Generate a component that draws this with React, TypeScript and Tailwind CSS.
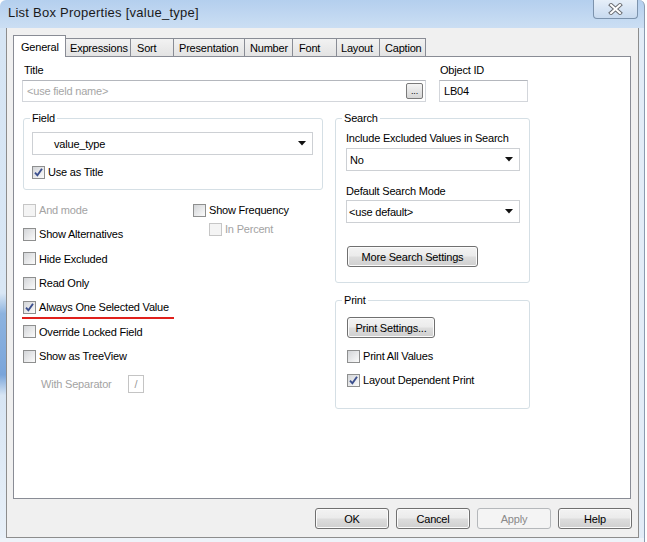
import React from "react";

type CheckProps = {
  label: string;
  checked?: boolean;
  disabled?: boolean;
  className?: string;
};

// checkbox in the Windows 7 style
function Check({ label, checked, disabled, className = "" }: CheckProps) {
  return (
    <div className={`flex items-center ${className}`}>
      <div
        className={`w-[13px] h-[13px] border flex items-center justify-center shrink-0 ${
          disabled
            ? "border-[#c6c6c6] bg-[#f4f4f4]"
            : "border-[#8e8f8f] bg-gradient-to-br from-[#d3d5d8] to-[#fbfbfb]"
        }`}
      >
        {checked && (
          <svg width="11" height="11" viewBox="0 0 11 11">
            <path d="M2 5.6 L4.4 8.3 L9 1.8" fill="none" stroke="#3b4f8e" strokeWidth="1.9" />
          </svg>
        )}
      </div>
      <span className={`ml-[3px] leading-[14px] whitespace-nowrap ${disabled ? "text-[#a3a3a3]" : ""}`}>
        {label}
      </span>
    </div>
  );
}

function Btn({
  children,
  className = "",
  disabled,
}: {
  children: React.ReactNode;
  className?: string;
  disabled?: boolean;
}) {
  return (
    <div
      className={`h-[21px] rounded-[3px] border flex items-center justify-center leading-[14px] ${
        disabled
          ? "border-[#b5b8bb] bg-[#f4f4f4] text-[#8a8a8a]"
          : "border-[#707070] bg-[linear-gradient(to_bottom,#f3f3f3_0%,#ebebeb_48%,#dddddd_52%,#cfcfcf_100%)] shadow-[inset_0_0_0_1px_#fbfbfb]"
      } ${className}`}
    >
      {children}
    </div>
  );
}

function Dropdown({ value, className = "", textClass = "pl-[3px]" }: { value: string; className?: string; textClass?: string }) {
  return (
    <div className={`h-[23px] border border-[#cdd0d4] bg-white flex items-center justify-between ${className}`}>
      <span className={`leading-[14px] ${textClass}`}>{value}</span>
      <svg width="8" height="5" viewBox="0 0 8 5" className="mr-[6px]">
        <path d="M0 0 H8 L4 4.5 Z" fill="#111" />
      </svg>
    </div>
  );
}

const tabs = [
  { name: "Expressions", w: "w-[66px]", pl: "pl-[4px]" },
  { name: "Sort", w: "w-[44px]", pl: "pl-[6px]" },
  { name: "Presentation", w: "w-[72px]", pl: "pl-[5px]" },
  { name: "Number", w: "w-[49px]", pl: "pl-[5px]" },
  { name: "Font", w: "w-[45px]", pl: "pl-[6px]" },
  { name: "Layout", w: "w-[44px]", pl: "pl-[4px]" },
  { name: "Caption", w: "w-[47px]", pl: "pl-[5px]" },
];

export default function App() {
  return (
    <div className="w-[647px] h-[542px] bg-white font-['Liberation_Sans',Arial,sans-serif] text-[11px] tracking-[-0.2px] text-black overflow-hidden">
      <div className="w-[645px] h-[542px] flex flex-col rounded-t-[6px] bg-[linear-gradient(to_bottom,#b4cfee_0%,#cfe1f4_6%,#d8e6f5_40%,#e4eef8_100%)] border-r border-[#8a9bb0]">
        {/* title bar */}
        <div className="h-[28px] flex items-start shrink-0">
          <div className="pl-[8px] pt-[5px] text-[13px] leading-[16px] tracking-[0.25px] text-[#1a1a1a]">
            List Box Properties [value_type]
          </div>
          <div className="ml-auto mr-[6px] w-[45px] h-[19px] rounded-b-[4px] border border-t-0 border-[#7c93ad] bg-gradient-to-b from-[#e6eff9] to-[#c8daef] flex items-center justify-center">
            <svg width="15" height="12" viewBox="0 0 15 12">
              <path d="M3 2 L12 10 M12 2 L3 10" stroke="#6b6f75" strokeWidth="4" strokeLinecap="square" />
              <path d="M3 2 L12 10 M12 2 L3 10" stroke="#ffffff" strokeWidth="2" strokeLinecap="square" />
            </svg>
          </div>
        </div>

        <div className="flex flex-1">
          {/* left frame */}
          <div className="w-[6px] bg-[linear-gradient(to_bottom,#d6e5f4_0%,#d9e7f5_52%,#8db3df_56%,#7aa5da_68%,#d7e5f4_72%,#e8f0f8_100%)]" />

          {/* client area */}
          <div className="w-[633px] h-[510px] bg-[#f0f0f0] border-l border-r border-b border-[#8d8d8d] pl-[6px] pt-[7px]">
            {/* tabs */}
            <div className="flex items-end h-[21px]">
              <div className="relative z-10 w-[53px] h-[22px] mb-[-1px] bg-white border border-b-0 border-[#898c95] pl-[7px] pt-[4px] leading-[14px]">
                General
              </div>
              {tabs.map((t) => (
                <div
                  key={t.name}
                  className={`${t.w} ${t.pl} h-[18px] ml-[-1px] border border-b-0 border-[#898c95] bg-gradient-to-b from-[#f2f2f2] to-[#e3e3e3] flex items-center leading-[14px]`}
                >
                  {t.name}
                </div>
              ))}
            </div>

            {/* tab panel */}
            <div className="w-[618px] h-[443px] border border-[#898c95] bg-white pl-[8px] pt-[6px]">
              {/* title / object id */}
              <div className="flex gap-[13px]">
                <div className="w-[404px]">
                  <div className="h-[14px] leading-[14px] pl-[2px]">Title</div>
                  <div className="mt-[3px] h-[22px] border border-[#d3d6db] border-t-[#b4b7bd] flex items-center justify-between">
                    <span className="pl-[4px] text-[#a6a6a6] leading-[14px]">&lt;use field name&gt;</span>
                    <div className="mr-[2px] w-[17px] h-[16px] rounded-[2px] border border-[#7a7a7a] bg-gradient-to-b from-[#f4f4f4] to-[#d6d6d6] flex items-end justify-center text-[9px] leading-[10px] pb-[2px]">
                      ...
                    </div>
                  </div>
                </div>
                <div className="w-[89px]">
                  <div className="h-[14px] leading-[14px] pl-[1px]">Object ID</div>
                  <div className="mt-[3px] h-[22px] border border-[#d3d6db] border-t-[#b4b7bd] flex items-center">
                    <span className="pl-[4px] leading-[14px]">LB04</span>
                  </div>
                </div>
              </div>

              <div className="mt-[9px] flex gap-[12px]">
                {/* left column */}
                <div className="w-[301px]">
                  <fieldset className="ml-[1px] w-[300px] border border-[#d5dfe5] rounded-[3px] px-[8px] pb-[10px]">
                    <legend className="ml-[-2px] px-[2px] leading-[14px]">Field</legend>
                    <Dropdown value="value_type" className="mt-[7px] w-[281px]" textClass="pl-[21px]" />
                    <Check label="Use as Title" checked className="mt-[10px] h-[14px]" />
                  </fieldset>

                  <div className="mt-[8px] flex">
                    <div className="w-[170px] ml-[1px]">
                      <Check label="And mode" disabled className="h-[24.33px]" />
                      <Check label="Show Alternatives" className="h-[24.33px]" />
                      <Check label="Hide Excluded" className="h-[24.33px]" />
                      <Check label="Read Only" className="h-[24.33px]" />
                      <div className="relative h-[24.33px]">
                        <Check label="Always One Selected Value" checked className="h-full" />
                        <div className="absolute left-[-1px] top-[22px] w-[152px] h-[2px] bg-[#e0201c]" />
                      </div>
                      <Check label="Override Locked Field" className="h-[24.33px]" />
                      <Check label="Show as TreeView" className="h-[24.33px]" />
                      <div className="mt-[7px] flex items-center h-[18px]">
                        <span className="ml-[18px] w-[87px] text-[#a3a3a3] leading-[14px]">With Separator</span>
                        <div className="w-[16px] h-[18px] border border-[#c4c4c4] flex items-center justify-center text-[#9a9a9a] leading-[14px]">
                          /
                        </div>
                      </div>
                    </div>
                    <div>
                      <Check label="Show Frequency" className="h-[24.33px]" />
                      <Check label="In Percent" disabled className="h-[14px] ml-[16px]" />
                    </div>
                  </div>
                </div>

                {/* right column */}
                <div className="w-[195px]">
                  <fieldset className="w-[195px] border border-[#d5dfe5] rounded-[3px] pl-[10px] pr-[8px] pb-[15px]">
                    <legend className="ml-[-4px] px-[2px] leading-[14px]">Search</legend>
                    <div className="mt-[6px] h-[14px] leading-[14px] whitespace-nowrap">Include Excluded Values in Search</div>
                    <Dropdown value="No" className="mt-[3px] w-[174px]" textClass="pl-[3px]" />
                    <div className="mt-[13px] h-[14px] leading-[14px]">Default Search Mode</div>
                    <Dropdown value="<use default>" className="mt-[2px] w-[174px]" textClass="pl-[2px]" />
                    <Btn className="mt-[23px] ml-[1px] w-[131px]">More Search Settings</Btn>
                  </fieldset>

                  <fieldset className="mt-[10px] w-[195px] border border-[#d5dfe5] rounded-[3px] pl-[10px] pr-[8px] pb-[21px]">
                    <legend className="ml-[-4px] px-[2px] leading-[14px]">Print</legend>
                    <Btn className="mt-[10px] ml-[1px] w-[88px]">Print Settings...</Btn>
                    <Check label="Print All Values" className="mt-[11px] ml-[1px] h-[14px]" />
                    <Check label="Layout Dependent Print" checked className="mt-[10px] ml-[1px] h-[14px]" />
                  </fieldset>
                </div>
              </div>
            </div>

            {/* dialog buttons */}
            <div className="mt-[9px] pr-[6px] flex justify-end gap-[7px]">
              <Btn className="w-[74px]">OK</Btn>
              <Btn className="w-[74px]">Cancel</Btn>
              <Btn className="w-[74px]" disabled>
                Apply
              </Btn>
              <Btn className="w-[74px]">Help</Btn>
            </div>
          </div>

          {/* right frame */}
          <div className="flex-1 bg-[#e2ecf7]" />
        </div>

        <div className="h-[4px] bg-[#eef3f9] shrink-0" />
      </div>
    </div>
  );
}
